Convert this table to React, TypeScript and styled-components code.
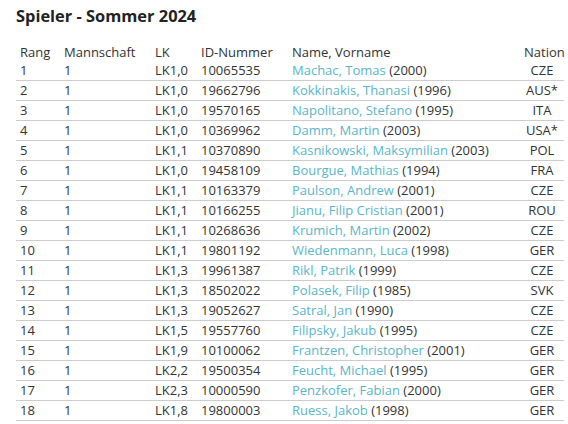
import React from "react";
import styled, {createGlobalStyle} from "styled-components";

interface Player {
    rang: number;
    team: number;
    lk: string;
    id: string;
    name: string;
    year: number;
    nation: string;
}

const players: Player[] = [
    {rang: 1, team: 1, lk: 'LK1,0', id: '10065535', name: 'Machac, Tomas', year: 2000, nation: 'CZE'},
    {rang: 2, team: 1, lk: 'LK1,0', id: '19662796', name: 'Kokkinakis, Thanasi', year: 1996, nation: 'AUS*'},
    {rang: 3, team: 1, lk: 'LK1,0', id: '19570165', name: 'Napolitano, Stefano', year: 1995, nation: 'ITA'},
    {rang: 4, team: 1, lk: 'LK1,0', id: '10369962', name: 'Damm, Martin', year: 2003, nation: 'USA*'},
    {rang: 5, team: 1, lk: 'LK1,1', id: '10370890', name: 'Kasnikowski, Maksymilian', year: 2003, nation: 'POL'},
    {rang: 6, team: 1, lk: 'LK1,0', id: '19458109', name: 'Bourgue, Mathias', year: 1994, nation: 'FRA'},
    {rang: 7, team: 1, lk: 'LK1,1', id: '10163379', name: 'Paulson, Andrew', year: 2001, nation: 'CZE'},
    {rang: 8, team: 1, lk: 'LK1,1', id: '10166255', name: 'Jianu, Filip Cristian', year: 2001, nation: 'ROU'},
    {rang: 9, team: 1, lk: 'LK1,1', id: '10268636', name: 'Krumich, Martin', year: 2002, nation: 'CZE'},
    {rang: 10, team: 1, lk: 'LK1,1', id: '19801192', name: 'Wiedenmann, Luca', year: 1998, nation: 'GER'},
    {rang: 11, team: 1, lk: 'LK1,3', id: '19961387', name: 'Rikl, Patrik', year: 1999, nation: 'CZE'},
    {rang: 12, team: 1, lk: 'LK1,3', id: '18502022', name: 'Polasek, Filip', year: 1985, nation: 'SVK'},
    {rang: 13, team: 1, lk: 'LK1,3', id: '19052627', name: 'Satral, Jan', year: 1990, nation: 'CZE'},
    {rang: 14, team: 1, lk: 'LK1,5', id: '19557760', name: 'Filipsky, Jakub', year: 1995, nation: 'CZE'},
    {rang: 15, team: 1, lk: 'LK1,9', id: '10100062', name: 'Frantzen, Christopher', year: 2001, nation: 'GER'},
    {rang: 16, team: 1, lk: 'LK2,2', id: '19500354', name: 'Feucht, Michael', year: 1995, nation: 'GER'},
    {rang: 17, team: 1, lk: 'LK2,3', id: '10000590', name: 'Penzkofer, Fabian', year: 2000, nation: 'GER'},
    {rang: 18, team: 1, lk: 'LK1,8', id: '19800003', name: 'Ruess, Jakob', year: 1998, nation: 'GER'},
];

const GlobalStyle = createGlobalStyle`
    body {
        margin: 0;
        background: #fff;
        font-family: "Open Sans", "Liberation Sans", sans-serif;
        color: #333;
    }
`;

const App: React.FC = () => {
    return (
        <>
            <GlobalStyle/>
            <Page>
                <Title>Spieler - Sommer 2024</Title>
                <Table>
                    <colgroup>
                        <col style={{width: '44px'}}/>
                        <col style={{width: '91px'}}/>
                        <col style={{width: '46px'}}/>
                        <col style={{width: '91px'}}/>
                        <col/>
                        <col style={{width: '44px'}}/>
                    </colgroup>
                    <thead>
                        <tr>
                            <Th>Rang</Th>
                            <Th>Mannschaft</Th>
                            <Th>LK</Th>
                            <Th>ID-Nummer</Th>
                            <Th>Name, Vorname</Th>
                            <Th align="center">Nation</Th>
                        </tr>
                    </thead>
                    <tbody>
                        {players.map((p) => (
                            <Row key={p.rang}>
                                <Td>{p.rang}</Td>
                                <Td>{p.team}</Td>
                                <Td>{p.lk}</Td>
                                <Td>{p.id}</Td>
                                <Td><PlayerLink href="#">{p.name}</PlayerLink> ({p.year})</Td>
                                <Td align="center">{p.nation}</Td>
                            </Row>
                        ))}
                    </tbody>
                </Table>
            </Page>
        </>
    )
}

export default App;

const Page = styled.div`
    padding: 4px 2px 0 16px;
`;

const Title = styled.h1`
    font-size: 16.4px;
    font-weight: 700;
    color: #222;
    margin: 0 0 15px 0;
    line-height: 24px;
`;

const Table = styled.table`
    width: 548px;
    border-collapse: collapse;
    table-layout: fixed;
    font-size: 13px;
`;

const Th = styled.th<{align?: string}>`
    font-weight: 400;
    text-align: ${({align}) => align || 'left'};
    padding: 0 4px;
    height: 18px;
    line-height: 18px;
    white-space: nowrap;
`;

const Row = styled.tr`
    border-bottom: 1px solid #ccc;
`;

const Td = styled.td<{align?: string}>`
    text-align: ${({align}) => align || 'left'};
    padding: 0 4px;
    height: 19px;
    line-height: 19px;
    white-space: nowrap;
`;

const PlayerLink = styled.a`
    color: #5ab6c6;
    text-decoration: none;
`;
